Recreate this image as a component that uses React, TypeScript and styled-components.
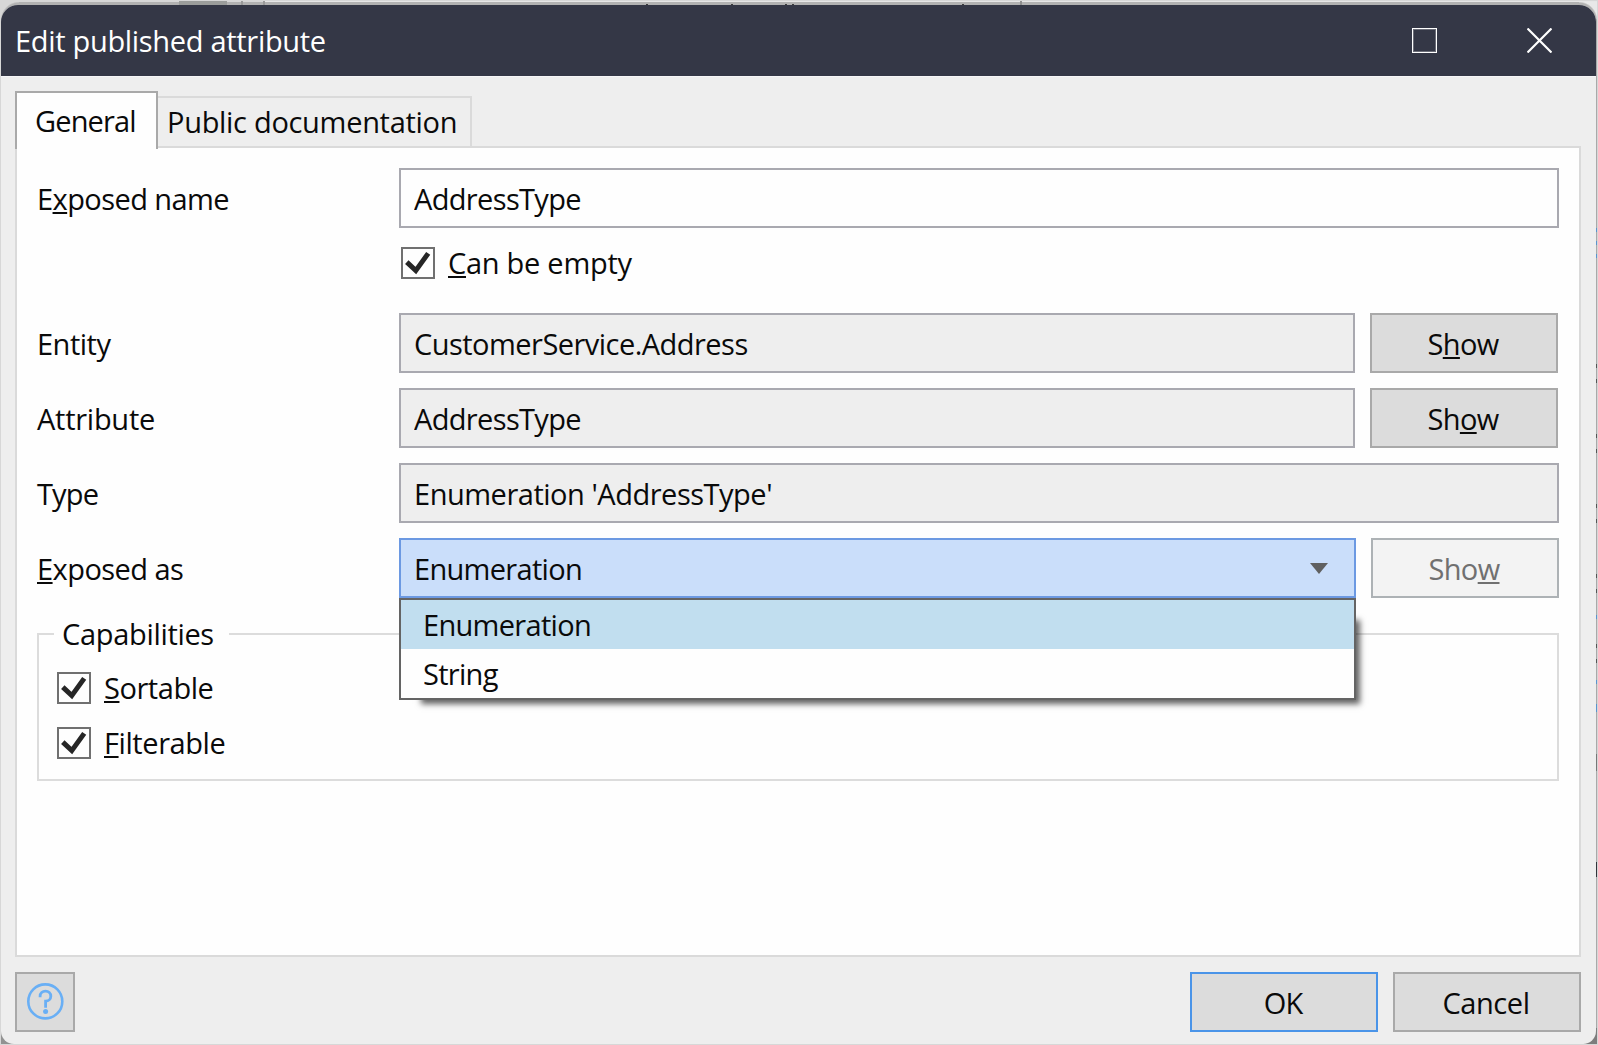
import React from "react";
import styled, { createGlobalStyle, css } from "styled-components";

const GlobalStyle = createGlobalStyle`
  *, *::before, *::after { box-sizing: border-box; }
  body {
    margin: 0;
    overflow: hidden;
    font-family: "Open Sans", "Noto Sans", sans-serif;
    font-size: 29px;
    line-height: 40px;
    color: #0a0a0a;
  }
  button, input { font: inherit; color: inherit; }
`;

const tick = (color: string, x: number, y: number, w: number, h: number) =>
  `linear-gradient(${color}, ${color}) ${x}px ${y}px / ${w}px ${h}px no-repeat`;

/* Slivers of the application window that stay visible round the dialog. */
const slivers = [
  ...[646, 731, 785, 792, 962].map((x) => tick("#3c3c3c", x, 4, 2, 1)),
  tick("#8f8f8f", 1020, 1, 2, 4),
  tick("#9b9d9b", 179, 1, 48, 4),
  tick("#9a9a9a", 241, 1, 2, 4),
  tick("#9a9a9a", 263, 1, 2, 4),
  ...[228, 241, 254, 615, 680].map((y) => tick("#5b93cf", 1596, y, 1, 4)),
  tick("#5b93cf", 1596, 704, 1, 8),
  ...[364, 379, 434, 449, 504, 519, 574, 589, 644, 659].map((y) => tick("#555555", 1596, y, 1, 4)),
  tick("#777777", 1596, 754, 1, 17),
  tick("#33343a", 1596, 862, 1, 15),
];

const Backdrop = styled.div`
  width: 1598px;
  height: 1045px;
  padding: 5px 2px 1px 1px;
  background:
    ${slivers.join(",\n    ")},
    radial-gradient(circle at 19px 20px, #b2b2b2 17px, transparent 18.5px) 0 0 / 19px 20px no-repeat,
    radial-gradient(circle at 0 20px, #b2b2b2 17px, transparent 18.5px) 1579px 0 / 18px 20px no-repeat,
    ${tick("#b2b2b2", 19, 2, 1560, 3)},
    ${tick("#e6e6e6", 265, 1, 1332, 1)},
    ${tick("#e8e8e8", 1579, 1, 18, 18)},
    ${tick("#929292", 1, 1030, 16, 14)},
    ${tick("#7d7d7d", 1584, 1028, 13, 16)},
    ${tick("#a9a9a9", 1596, 18, 1, 1012)},
    #d7d7d7;
`;

const Dialog = styled.section`
  display: flex;
  flex-direction: column;
  height: 1039px;
  overflow: hidden;
  border-radius: 17px 17px 13px 13px;
  background: #eeeeee;
`;

const TitleBar = styled.header`
  display: flex;
  align-items: center;
  height: 71px;
  flex: none;
  padding: 0 44px 0 14px;
  background: #343746;
  color: #ffffff;
`;

const Title = styled.h1`
  flex: 1;
  margin: 0;
  padding-top: 1px;
  font-size: 29px;
  font-weight: 400;
  letter-spacing: -0.31px;
`;

const WindowButton = styled.button`
  display: flex;
  width: 25px;
  height: 25px;
  margin: 0 0 1px 90px;
  padding: 0;
  border: 0;
  background: none;
`;

const Body = styled.div`
  display: flex;
  flex: 1;
  flex-direction: column;
  padding: 15px 15px 12px 14px;
  border-top: 1px solid #f6f6f8;
`;

const Tabs = styled.div`
  display: flex;
  align-items: flex-end;
  height: 56px;
  flex: none;
  margin-top: -1px;
`;

const Tab = styled.button<{ $active?: boolean; $tracking: number }>`
  text-align: left;
  letter-spacing: ${(p) => p.$tracking}px;
  ${(p) =>
    p.$active
      ? css`
          z-index: 1;
          width: 143px;
          height: 58px;
          margin-bottom: -2px;
          padding: 0 0 1px 18px;
          border: 2px solid #a9a9a9;
          border-bottom: 0;
          background: #fefefe;
        `
      : css`
          width: 314px;
          height: 51px;
          padding: 0 0 1px 9px;
          border: 2px solid #dadada;
          border-width: 2px 2px 0 0;
          background: #eeeeee;
        `}
`;

const Panel = styled.div`
  flex: 1;
  margin-top: -1px;
  padding: 20px;
  border: 2px solid #dadada;
  background: #fefefe;
`;

const Row = styled.div`
  display: grid;
  grid-template-columns: 362px 1fr;
  align-items: center;
  margin-bottom: 15px;
`;

const Controls = styled.div<{ $inset?: number }>`
  display: flex;
  gap: 15px;
  padding-right: ${(p) => p.$inset ?? 0}px;
`;

const Caption = styled.span<{ $tracking: number }>`
  padding-top: 2px;
  letter-spacing: ${(p) => p.$tracking}px;
`;

const Key = styled.span`
  text-decoration: underline;
  text-decoration-thickness: 2px;
  text-decoration-skip-ink: none;
  text-underline-offset: 2px;
`;

const Field = styled.input<{ $tracking: number }>`
  flex: 1;
  min-width: 0;
  height: 60px;
  padding: 0 13px;
  border: 2px solid #a9a9b0;
  border-radius: 0;
  outline: none;
  background: ${(p) => (p.readOnly ? "#eeeeee" : "#fefefe")};
  letter-spacing: ${(p) => p.$tracking}px;
`;

const Button = styled.button<{ $primary?: boolean; $tracking?: number }>`
  width: 188px;
  height: 60px;
  flex: none;
  padding: 2px 2px 0 0;
  border: 2px solid ${(p) => (p.$primary ? "#4a94e8" : "#a9a9a9")};
  background: #dcdcdc;
  letter-spacing: ${(p) => p.$tracking ?? -0.65}px;

  &:disabled {
    border-color: #adb2b5;
    background: #f3f3f3;
    color: #707070;
  }
`;

const Select = styled.div`
  position: relative;
  display: flex;
  align-items: center;
  justify-content: space-between;
  flex: 1;
  height: 60px;
  padding: 2px 26px 0 13px;
  border: 2px solid #6c99e2;
  background: #cadefa;
  letter-spacing: -0.7px;
`;

const Arrow = styled.svg`
  margin-bottom: 2px;
`;

const Popup = styled.div`
  position: absolute;
  z-index: 2;
  top: 58px;
  left: -2px;
  right: -2px;

  &::before {
    content: "";
    position: absolute;
    inset: 20px 0 0 20px;
    box-shadow: 3px 3px 6px 1px rgba(0, 0, 0, 0.62);
  }
`;

const Menu = styled.ul`
  position: relative;
  margin: 0;
  padding: 0;
  border: 2px solid #646464;
  background: #fefefe;
  list-style: none;
`;

const Option = styled.li<{ $selected?: boolean }>`
  height: 49px;
  padding: 5px 22px 0;
  background: ${(p) => (p.$selected ? "#c1deef" : "#fefefe")};
`;

const Check = styled.label<{ $tracking: number }>`
  display: flex;
  align-items: center;
  gap: 13px;
  height: 32px;
  letter-spacing: ${(p) => p.$tracking}px;
`;

const CanBeEmpty = styled.div`
  margin: 19px 0 34px 364px;
`;

const CheckBox = styled.span`
  display: flex;
  width: 34px;
  height: 32px;
  border: 2px solid #707070;
  background: #fefefe;
`;

const Group = styled.fieldset`
  display: flex;
  flex-direction: column;
  gap: 23px;
  margin: 16px 0 0;
  padding: 18px 15px 20px;
  border: 2px solid #dcdcdc;
`;

const Legend = styled.legend`
  width: 175px;
  height: 40px;
  padding: 0 0 0 8px;
  letter-spacing: -0.32px;
`;

const GroupCheck = styled.div`
  padding-left: 3px;
`;

const Footer = styled.footer`
  display: flex;
  gap: 15px;
  margin-top: 15px;
`;

const HelpButton = styled.button`
  display: flex;
  width: 60px;
  height: 60px;
  margin-right: auto;
  padding: 0;
  border: 2px solid #a9a9a9;
  background: #dcdcdc;
`;

function CheckOption({ mark, rest, tracking }: { mark: string; rest: string; tracking: number }) {
  return (
    <Check $tracking={tracking}>
      <CheckBox>
        <svg width="30" height="28" viewBox="0 0 30 28">
          <path d="M3.8 13.2 12.8 21.6 25.2 4.4" fill="none" stroke="#262626" strokeWidth="5" />
        </svg>
      </CheckBox>
      <span>
        <Key>{mark}</Key>
        {rest}
      </span>
    </Check>
  );
}

export default function App() {
  return (
    <>
      <GlobalStyle />
      <Backdrop>
        <Dialog>
          <TitleBar>
            <Title>Edit published attribute</Title>
            <WindowButton aria-label="Maximize">
              <svg width="25" height="25" viewBox="0 0 25 25" fill="none">
                <rect x="1.5" y="1.5" width="22" height="22" stroke="#6b6d78" />
                <rect x=".5" y=".5" width="24" height="24" stroke="#fff" />
              </svg>
            </WindowButton>
            <WindowButton aria-label="Close">
              <svg width="25" height="25" viewBox="0 0 25 25">
                <path d="M.5.5l24 24M24.5.5l-24 24" stroke="#fff" strokeWidth="2.2" />
              </svg>
            </WindowButton>
          </TitleBar>
          <Body>
            <Tabs>
              <Tab $active $tracking={-0.87}>General</Tab>
              <Tab $tracking={-0.3}>Public documentation</Tab>
            </Tabs>
            <Panel>
              <Row>
                <Caption $tracking={-0.58}>E<Key>x</Key>posed name</Caption>
                <Controls>
                  <Field $tracking={-0.65} defaultValue="AddressType" />
                </Controls>
              </Row>
              <CanBeEmpty>
                <CheckOption mark="C" rest="an be empty" tracking={-0.27} />
              </CanBeEmpty>
              <Row>
                <Caption $tracking={-0.5}>Entity</Caption>
                <Controls $inset={1}>
                  <Field $tracking={-0.53} readOnly value="CustomerService.Address" />
                  <Button>S<Key>h</Key>ow</Button>
                </Controls>
              </Row>
              <Row>
                <Caption $tracking={-0.26}>Attribute</Caption>
                <Controls $inset={1}>
                  <Field $tracking={-0.65} readOnly value="AddressType" />
                  <Button>Sh<Key>o</Key>w</Button>
                </Controls>
              </Row>
              <Row>
                <Caption $tracking={-0.85}>Type</Caption>
                <Controls>
                  <Field $tracking={-0.48} readOnly value="Enumeration 'AddressType'" />
                </Controls>
              </Row>
              <Row>
                <Caption $tracking={-0.55}><Key>E</Key>xposed as</Caption>
                <Controls>
                  <Select>
                    Enumeration
                    <Arrow width="18" height="11" viewBox="0 0 18 11">
                      <path d="M0 0h18L9 11z" fill="#606060" />
                    </Arrow>
                    <Popup>
                      <Menu>
                        <Option $selected>Enumeration</Option>
                        <Option>String</Option>
                      </Menu>
                    </Popup>
                  </Select>
                  <Button disabled>Sho<Key>w</Key></Button>
                </Controls>
              </Row>
              <Group>
                <Legend>Capabilities</Legend>
                <GroupCheck>
                  <CheckOption mark="S" rest="ortable" tracking={-0.45} />
                </GroupCheck>
                <GroupCheck>
                  <CheckOption mark="F" rest="ilterable" tracking={-0.42} />
                </GroupCheck>
              </Group>
            </Panel>
            <Footer>
              <HelpButton aria-label="Help">
                <svg width="56" height="56" viewBox="0 0 56 56" fill="none" stroke="#69aff5">
                  <circle cx="28.3" cy="27.4" r="17" strokeWidth="2.6" />
                  <path d="M23.1 23.2v-.9c0-3 2.4-5.1 5.4-5.1s5.3 2.1 5.3 5-2.3 4.9-5.2 4.9v6.7" strokeWidth="2.8" />
                  <circle cx="28.6" cy="37.6" r="2.5" fill="#69aff5" stroke="none" />
                </svg>
              </HelpButton>
              <Button $primary $tracking={-0.9}>OK</Button>
              <Button $tracking={-0.44}>Cancel</Button>
            </Footer>
          </Body>
        </Dialog>
      </Backdrop>
    </>
  );
}
